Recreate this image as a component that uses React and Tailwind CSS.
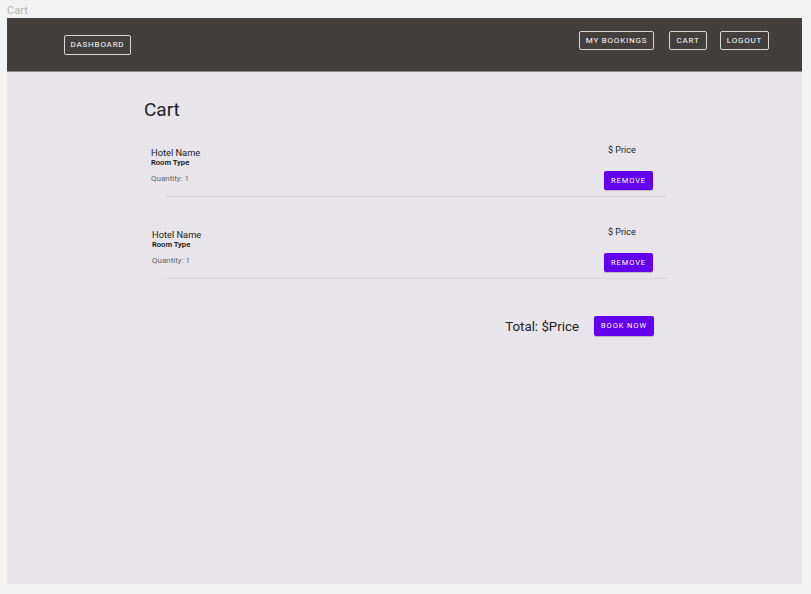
import React from "react";

const items = [
  { name: "Hotel Name", room: "Room Type", qty: 1, shift: "" },
  { name: "Hotel Name", room: "Room Type", qty: 1, shift: "pl-px" },
];

function NavButton({ children, className = "" }) {
  return (
    <button
      className={
        "border border-[#d9d6d6] rounded-[2px] text-white text-[8px] tracking-[0.1em] uppercase flex items-center justify-center " +
        className
      }
    >
      {children}
    </button>
  );
}

function CartItem({ item, first }) {
  return (
    <div className={(first ? "" : "mt-[28px] ") + item.shift}>
      <div className="flex justify-between">
        <div className="flex flex-col">
          <div className="mt-[4px] text-[9.3px] leading-[12px] text-[#222]">{item.name}</div>
          <div className="text-[7.6px] leading-[8px] font-semibold text-[#111]">{item.room}</div>
          <div className="mt-[7px] text-[8px] leading-[10px] text-[#666]">Quantity: {item.qty}</div>
        </div>
        <div className="flex flex-col items-start mr-[14px]">
          <div className="ml-[4px] mt-px text-[9px] leading-[12px] text-[#222]">$ Price</div>
          <button className="mt-[15px] w-[49px] h-[19px] rounded-[2px] bg-[#6200ee] text-white text-[7.5px] tracking-[0.12em] shadow-[0_1px_1px_rgba(0,0,0,0.2)]">
            REMOVE
          </button>
        </div>
      </div>
      <div className="mt-[6px] ml-[14px] border-b border-[#d8d6da]" />
    </div>
  );
}

export default function App() {
  return (
    <div
      className="bg-[#f2f2f2] h-[594px] w-[811px] overflow-hidden"
      style={{ fontFamily: "Roboto, 'Liberation Sans', sans-serif" }}
    >
      <div className="pl-[7px] pt-[4px] h-[18px] text-[11px] leading-[14px] text-[#b5b5b5]">Cart</div>
      <div className="ml-[7px] w-[795px] h-[566px] bg-[#e7e5ea] flex flex-col">
        <header className="h-[54px] bg-[#433f3d] border-b border-[#8e8a8b] flex justify-between">
          <NavButton className="ml-[57px] mt-[17px] w-[67px] h-[20px]">Dashboard</NavButton>
          <div className="flex mt-[13px] mr-[33px] gap-[15px]">
            <NavButton className="w-[75px] h-[19px]">My Bookings</NavButton>
            <NavButton className="w-[38px] h-[19px]">Cart</NavButton>
            <NavButton className="ml-[-2px] w-[49px] h-[19px]">Logout</NavButton>
          </div>
        </header>
        <main className="pl-[137px]">
          <h1 className="mt-[26px] text-[19px] leading-[24px] text-[#222]">Cart</h1>
          <div className="mt-[21px] ml-[7px] w-[516px]">
            {items.map((item, i) => (
              <CartItem key={i} item={item} first={i === 0} />
            ))}
            <div className="mt-[36px] mr-[13px] flex justify-end items-center gap-[15px]">
              <span className="mt-[2px] text-[13.3px] leading-[20px] text-[#222]">Total: $Price</span>
              <button className="w-[60px] h-[20px] rounded-[2px] bg-[#6200ee] text-white text-[7.5px] tracking-[0.12em] shadow-[0_1px_1px_rgba(0,0,0,0.2)]">
                BOOK NOW
              </button>
            </div>
          </div>
        </main>
      </div>
    </div>
  );
}
